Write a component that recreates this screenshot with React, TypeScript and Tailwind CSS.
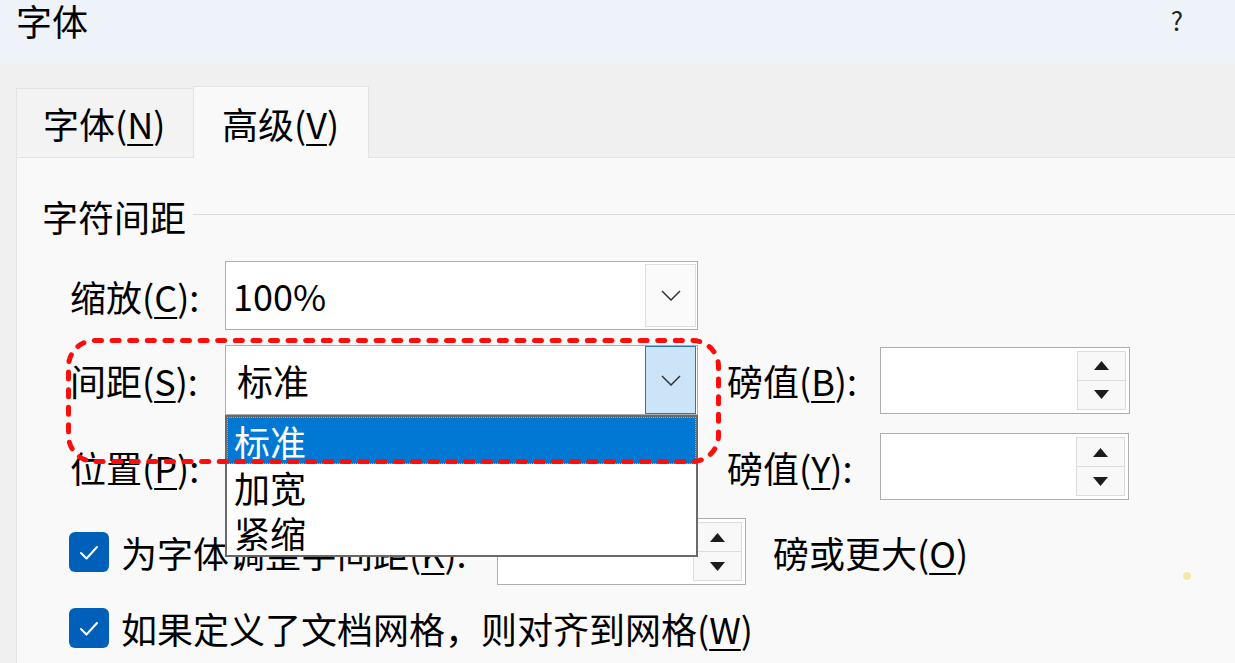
import React from 'react'

const Chevron = () => (
    <svg width="20" height="11" viewBox="0 0 20 11" fill="none">
        <path d="M1 1 L10 10 L19 1" stroke="#333" strokeWidth="1.5" />
    </svg>
)

const Tri = ({ up }: { up?: boolean }) => (
    <svg width="15" height="9" viewBox="0 0 15 9">
        <path d={up ? 'M0 9 L7.5 0 L15 9 Z' : 'M0 0 L7.5 9 L15 0 Z'} fill="#1c1c1c" />
    </svg>
)

const SpinBox = ({ w, value }: { w: string; value?: string }) => (
    <div className={`${w} h-[67px] border border-[#adadad] bg-white flex p-[3px]`}>
        <div className="flex-1 flex items-center pl-[14px] pb-[14px] text-[36px] leading-none font-['Liberation_Sans',sans-serif]">{value}</div>
        <div className="w-[49px] flex flex-col">
            <div className="flex-1 border border-[#dcdcdc] bg-[#f8f8f8] flex items-center justify-center">
                <Tri up />
            </div>
            <div className="flex-1 border border-[#dcdcdc] border-t-0 bg-[#f8f8f8] flex items-center justify-center">
                <Tri />
            </div>
        </div>
    </div>
)

const Check = () => (
    <div className="w-[40px] h-[40px] rounded-[6px] bg-[#005fb8] flex items-center justify-center shrink-0">
        <svg width="40" height="40" viewBox="0 0 40 40" fill="none">
            <path d="M12 21 L17.5 26.5 L28 15" stroke="#fff" strokeWidth="2" strokeLinecap="round" strokeLinejoin="round" />
        </svg>
    </div>
)

const Key = ({ k }: { k: string }) => <u className="underline decoration-2 underline-offset-[5px]">{k}</u>

export default function App() {
    return (
        <div className="relative w-[1235px] h-[663px] overflow-hidden bg-[#f0f0f0] text-black font-['Noto_Sans_CJK_SC','Noto_Sans',sans-serif]">
            {/* title bar */}
            <div className="h-[63px] bg-[#eef3fa] flex justify-between items-start pl-[16px]">
                <div className="h-[40px] flex items-center text-[36px] leading-none">字体</div>
                <div className="h-[40px] flex items-center text-[26px] leading-none mr-[52px] text-[#222]">?</div>
            </div>

            {/* tabs */}
            <div className="h-[94px] flex items-end pl-[16px]">
                <div className="w-[177px] h-[69px] bg-[#f3f3f3] border-t border-l border-[#e3e3e3] flex items-center pl-[26px] text-[36px] leading-none">
                    字体(<Key k="N" />)
                </div>
                <div className="relative z-10 -mb-px w-[176px] h-[72px] bg-[#f9f9f9] border-t border-l border-r border-[#e3e3e3] flex items-center pl-[28px] text-[36px] leading-none">
                    高级(<Key k="V" />)
                </div>
            </div>

            {/* panel */}
            <div className="ml-[16px] h-[520px] bg-[#f9f9f9] border-t border-l border-[#e3e3e3] pl-[25px] text-[36px] leading-none">
                <div className="mt-[38px] h-[40px] flex items-start gap-[7px]">
                    <span className="h-[40px] flex items-center">字符间距</span>
                    <div className="mt-[18px] flex-1 h-px bg-[#dadada]" />
                </div>

                <div className="mt-[25px] h-[69px] flex items-center pl-[28px]">
                    <span className="w-[155px]">缩放(<Key k="C" />):</span>
                    <div className="w-[473px] h-[69px] border border-[#adadad] bg-white flex">
                        <div className="flex-1 flex items-center pl-[7px] pb-[2px]">100%</div>
                        <div className="w-[51px] my-[2px] mr-[1px] border border-[#dedede] bg-[#fafafa] flex items-center justify-center">
                            <Chevron />
                        </div>
                    </div>
                </div>

                <div className="mt-[15px] h-[70px] flex items-center pl-[28px]">
                    <span className="w-[155px]">间距(<Key k="S" />):</span>
                    <div className="w-[473px] h-[70px] border border-[#adadad] bg-white flex">
                        <div className="flex-1 flex items-center pl-[11px]">标准</div>
                        <div className="w-[51px] mr-[1px] border border-[#2a74c0] bg-[#cce4f7] flex items-center justify-center">
                            <Chevron />
                        </div>
                    </div>
                    <span className="ml-[29px] w-[153px]">磅值(<Key k="B" />):</span>
                    <SpinBox w="w-[250px]" />
                </div>

                <div className="mt-[18px] h-[67px] flex items-center pl-[28px]">
                    <span className="w-[155px]">位置(<Key k="P" />):</span>
                    <div className="w-[473px] h-[67px] border border-[#adadad] bg-white" />
                    <span className="ml-[29px] w-[153px]">磅值(<Key k="Y" />):</span>
                    <SpinBox w="w-[249px]" />
                </div>

                <div className="mt-[18px] h-[67px] flex items-center pl-[27px]">
                    <Check />
                    <span className="ml-[12px] w-[376px]">为字体调整字间距(<Key k="K" />):</span>
                    <SpinBox w="w-[249px]" value="1" />
                    <span className="ml-[27px]">磅或更大(<Key k="O" />)</span>
                </div>

                <div className="mt-[23px] h-[40px] flex items-center pl-[27px]">
                    <Check />
                    <span className="ml-[12px]">如果定义了文档网格，则对齐到网格(<Key k="W" />)</span>
                </div>
            </div>

            {/* open dropdown list */}
            <div className="absolute left-[225px] top-[415px] w-[473px] h-[142px] bg-white border-2 border-[#6a6a6a] text-[36px] leading-none">
                <div className="h-[47px] bg-[#0078d4] text-white flex items-center pl-[7px] outline-1 outline-dotted outline-[#f0a040] -outline-offset-1">
                    标准
                </div>
                <div className="h-[46px] flex items-center pl-[7px]">加宽</div>
                <div className="h-[44px] flex items-center pl-[7px]">紧缩</div>
            </div>

            {/* red dotted highlight */}
            <svg className="absolute left-[65px] top-[337px]" width="658" height="129" viewBox="0 0 658 129" fill="none">
                <rect x="3.5" y="3.5" width="650" height="121" rx="26" stroke="#ff0d0d" strokeWidth="5" strokeDasharray="7 10.6" strokeLinecap="round" />
            </svg>

            <div className="absolute left-[1183px] top-[572px] w-[8px] h-[8px] rounded-full bg-[#f6e7a6]" />
        </div>
    )
}
